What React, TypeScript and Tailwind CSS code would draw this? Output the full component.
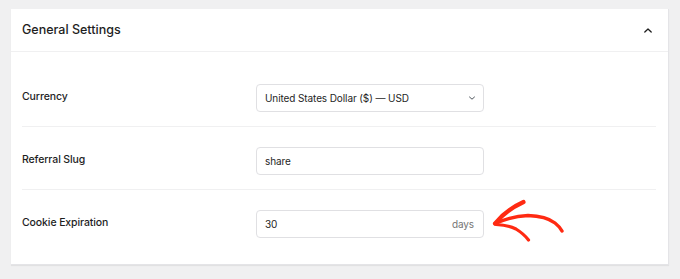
import React from "react";

const font = { fontFamily: "Inter, 'Liberation Sans', Arial, sans-serif" };

function Row({ label, children, last }: { label: string; children: React.ReactNode; last?: boolean }) {
  return (
    <div className={`flex items-center pt-5 pb-[14px] ${last ? "" : "border-b border-[#f0f0f1]"}`}>
      <div className="w-[234px] text-[10.5px] tracking-[-0.01em] font-medium text-[#1e1e1e] leading-none -mt-[1px]">{label}</div>
      {children}
    </div>
  );
}

export default function App() {
  return (
    <div className="w-[680px] h-[279px] bg-[#f0f0f1] pt-[9px] pl-[11px]" style={font}>
      <div className="w-[658px] bg-white shadow-[0_1px_1px_rgba(0,0,0,0.06)] border-r border-b border-[#e4e4e7]">
        <div className="h-[43px] flex items-center justify-between pl-[11px] pr-[15px] border-b border-[#f0f0f1]">
          <span className="text-[12.5px] font-medium text-[#1e1e1e]">General Settings</span>
          <svg width="10" height="7" viewBox="0 0 10 7" fill="none">
            <path d="M1.8 5 L5 2 L8.2 5" stroke="#1e1e1e" strokeWidth="1.3" strokeLinecap="round" strokeLinejoin="round" />
          </svg>
        </div>
        <div className="py-3 mx-[11px] mr-[12px]">
          <Row label="Currency">
            <div className="w-[228px] h-[28px] border border-[#e0e0e3] rounded-[4px] flex items-center justify-between pl-[8px] pr-[7px] text-[10px] tracking-[-0.01em] text-[#1e1e1e]">
              <span>United States Dollar ($) — USD</span>
              <svg width="8" height="6" viewBox="0 0 8 6" fill="none">
                <path d="M1.5 2 L4 4.2 L6.5 2" stroke="#50575e" strokeWidth="1" strokeLinecap="round" strokeLinejoin="round" />
              </svg>
            </div>
          </Row>
          <Row label="Referral Slug">
            <div className="w-[228px] h-[28px] border border-[#e0e0e3] rounded-[4px] flex items-center pl-[8px] text-[10px] tracking-[-0.01em] text-[#1e1e1e]">
              share
            </div>
          </Row>
          <Row label="Cookie Expiration" last>
            <div className="relative">
              <div className="w-[228px] h-[28px] border border-[#e0e0e3] rounded-[4px] flex items-center justify-between pl-[8px] pr-[9px] text-[10px] tracking-[-0.01em] text-[#1e1e1e]">
                <span>30</span>
                <span className="text-[#757575]">days</span>
              </div>
              <svg className="absolute left-[232px] top-[-14px]" width="80" height="50" viewBox="484 196 80 50" fill="none">
                <path d="M491 223.5 Q 508 216 524 215.5 Q 542 216 551 223 Q 556 227 558 231" stroke="#ff2a12" strokeWidth="3.4" strokeLinecap="round" fill="none" />
                <path d="M519.5 202 Q 502 210 491 223.5" stroke="#ff2a12" strokeWidth="4.2" strokeLinecap="round" fill="none" />
                <path d="M492 224.5 Q 504 225 512 229 Q 520 234 524.5 240" stroke="#ff2a12" strokeWidth="3.2" strokeLinecap="round" fill="none" />
              </svg>
            </div>
          </Row>
        </div>
      </div>
    </div>
  );
}
